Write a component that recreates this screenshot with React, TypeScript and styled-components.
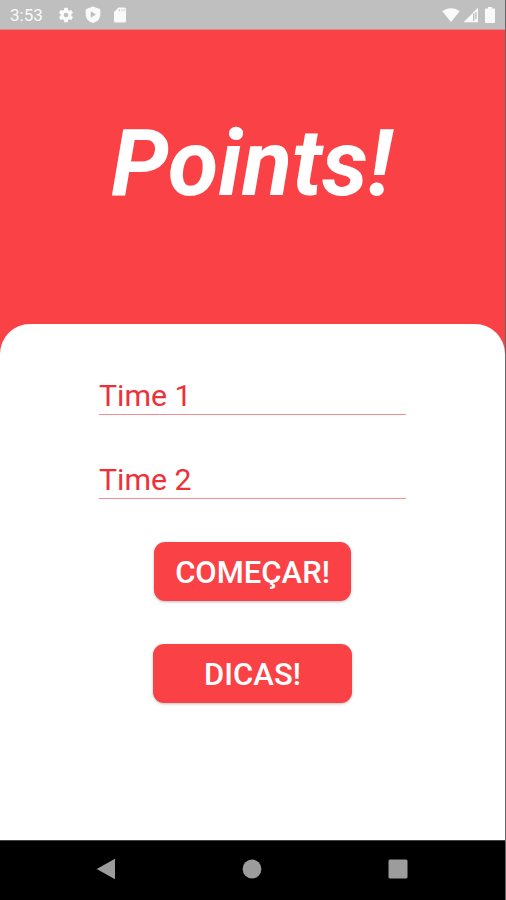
import React from "react";
import styled, { createGlobalStyle } from "styled-components";

const RED = "#fa4246";

const GlobalStyle = createGlobalStyle`
  *, *::before, *::after { box-sizing: border-box; }
  body {
    margin: 0;
    background: #fff;
    font-family: Roboto, "Liberation Sans", sans-serif;
  }
`;

const Phone = styled.main`
  display: flex;
  flex-direction: column;
  width: 506px;
  height: 900px;
  overflow: hidden;
  background: ${RED};
  border-right: 1px solid #666;
`;

const StatusBar = styled.header`
  display: flex;
  flex: none;
  justify-content: space-between;
  height: 30px;
  padding: 0 7px 0 10px;
  background: #bfbfbf;
  border-bottom: 1px solid #d68e90;
  color: #fafafa;
`;

const StatusGroup = styled.div<{ $gap: number }>`
  display: flex;
  align-items: center;
  gap: ${({ $gap }) => $gap}px;
`;

const Clock = styled.span`
  width: 38px;
  font-size: 17px;
  line-height: 30px;
  padding-top: 1px;
`;

const StatusIcon = styled.svg`
  display: block;
  fill: #fafafa;
`;

const Hero = styled.section`
  flex: none;
  height: 294px;
  padding: 80px 2px 0 0;
  text-align: center;
`;

const Title = styled.h1`
  margin: 0;
  color: #fff;
  font-size: 92px;
  font-style: italic;
  font-weight: 700;
  line-height: 108px;
`;

const Sheet = styled.form`
  display: flex;
  flex: 1;
  flex-direction: column;
  align-items: center;
  padding-top: 53px;
  background: #fff;
  border-radius: 30px 30px 0 0;
`;

const TeamInput = styled.input`
  width: 307px;
  height: 38px;
  margin: 0 0 46px;
  padding: 0;
  border: 0;
  border-bottom: 1px solid #f58e92;
  border-radius: 0;
  outline: 0;
  background: transparent;
  color: #ee3038;
  font: 400 30.3px/36px Roboto, "Liberation Sans", sans-serif;

  &::placeholder {
    color: #ee3038;
    opacity: 1;
  }
`;

const Actions = styled.div`
  display: flex;
  flex-direction: column;
  align-items: center;
  gap: 43px;
  margin-top: -3px;
`;

const ActionButton = styled.button<{ $width: number }>`
  width: ${({ $width }) => $width}px;
  height: 59px;
  margin: 0;
  padding: 3px 0 0;
  border: 0;
  border-radius: 11px;
  background: ${RED};
  box-shadow: 0 1px 3px rgba(0, 0, 0, 0.26);
  color: #fff;
  font: 500 31px/36px Roboto, "Liberation Sans", sans-serif;
`;

const NavBar = styled.nav`
  display: grid;
  flex: none;
  grid-template-columns: repeat(3, 146px);
  justify-content: center;
  align-items: center;
  justify-items: center;
  height: 60px;
  padding: 0 1px 3px 0;
  background: #000;
  border-top: 1px solid #444;
`;

const NavIcon = styled.svg`
  display: block;
  fill: #9c9c9c;
`;

export default function App() {
  return (
    <>
      <GlobalStyle />
      <Phone>
        <StatusBar>
          <StatusGroup $gap={9}>
            <Clock>3:53</Clock>
            <StatusIcon width="18" height="18" viewBox="0 0 24 24">
              <path d="M19.14 12.94c.04-.3.06-.61.06-.94s-.02-.64-.07-.94l2.03-1.58a.49.49 0 0 0 .12-.61l-1.92-3.32a.49.49 0 0 0-.59-.22l-2.39.96a7 7 0 0 0-1.62-.94l-.36-2.54A.48.48 0 0 0 13.92 2.4h-3.84a.48.48 0 0 0-.48.41l-.36 2.54c-.59.24-1.13.57-1.62.94l-2.39-.96a.49.49 0 0 0-.59.22L2.74 8.87a.48.48 0 0 0 .12.61l2.03 1.58a6 6 0 0 0 0 1.88l-2.03 1.58a.49.49 0 0 0-.12.61l1.92 3.32c.12.22.37.29.59.22l2.39-.96c.5.38 1.03.7 1.62.94l.36 2.54c.05.24.24.41.48.41h3.84c.24 0 .44-.17.47-.41l.36-2.54c.59-.24 1.13-.56 1.62-.94l2.39.96c.22.08.47 0 .59-.22l1.92-3.32a.48.48 0 0 0-.12-.61zM12 15.1a3.1 3.1 0 1 1 0-6.2 3.1 3.1 0 0 1 0 6.2z" />
            </StatusIcon>
            <StatusIcon width="18" height="19" viewBox="0 0 18 19">
              <path fillRule="evenodd" d="M9 1.500 16.3 4.300V9.2C16.3 13.5 13.2 17 9 18 4.8 17 1.7 13.5 1.7 9.2V4.300ZM6.7 6.300V12.800L12 9.600Z" />
            </StatusIcon>
            <StatusIcon width="18" height="18" viewBox="0 0 24 24">
              <path d="M18 2h-8L4 8v12c0 1.1.9 2 2 2h12c1.1 0 2-.9 2-2V4a2 2 0 0 0-2-2zm-6 5h-1V4h1zm3 0h-1V4h1zm3 0h-1V4h1z" />
            </StatusIcon>
          </StatusGroup>
          <StatusGroup $gap={3}>
            <StatusIcon width="18" height="16" viewBox="0 0 19 16">
              <path d="M.3 4C5.7-.3 13.3-.3 18.7 4L9.5 15.5Z" />
            </StatusIcon>
            <StatusIcon width="16" height="16" viewBox="0 0 16 16">
              <path fillRule="evenodd" d="M15 .8V15.3H.5ZM10 6.4V14H11.4V6.4ZM12.2 5V12H13.6V5Z" />
            </StatusIcon>
            <StatusIcon width="16" height="18" viewBox="0 0 16 18">
              <path d="M6 1h4v1.5h2c.7 0 1 .4 1 1V16c0 .6-.4 1-1 1H4c-.6 0-1-.4-1-1V3.500c0-.6.4-1 1-1h2Z" />
            </StatusIcon>
          </StatusGroup>
        </StatusBar>
        <Hero>
          <Title>Points!</Title>
        </Hero>
        <Sheet onSubmit={(event: React.FormEvent) => event.preventDefault()}>
          <TeamInput placeholder="Time 1" aria-label="Time 1" />
          <TeamInput placeholder="Time 2" aria-label="Time 2" />
          <Actions>
            <ActionButton type="submit" $width={197}>COMEÇAR!</ActionButton>
            <ActionButton type="button" $width={199}>DICAS!</ActionButton>
          </Actions>
        </Sheet>
        <NavBar>
          <NavIcon width="20" height="22" viewBox="0 0 20 22">
            <path d="M19 .7V21.300L.7 11Z" />
          </NavIcon>
          <NavIcon width="20" height="20" viewBox="0 0 20 20">
            <circle cx="10" cy="10" r="9.400" />
          </NavIcon>
          <NavIcon width="20" height="20" viewBox="0 0 20 20">
            <rect x=".5" y=".5" width="19" height="19" rx="1.500" />
          </NavIcon>
        </NavBar>
      </Phone>
    </>
  );
}
